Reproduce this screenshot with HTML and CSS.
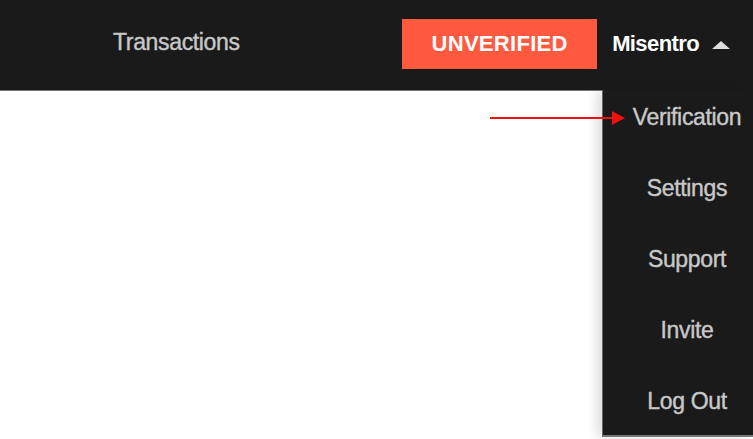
FILE: index.html
```html
<!DOCTYPE html>
<html>
<head>
<meta charset="utf-8">
<link rel="stylesheet" href="styles.css">
</head>
<body>
<header class="topbar">
  <nav class="nav">
    <a class="nav-link">Transactions</a>
  </nav>
  <div class="right">
    <span class="badge">UNVERIFIED</span>
    <button class="user">Misentro <span class="caret"></span></button>
  </div>
</header>
<main class="content">
  <ul class="menu">
    <li class="item">Verification</li>
    <li class="item">Settings</li>
    <li class="item">Support</li>
    <li class="item">Invite</li>
    <li class="item">Log Out</li>
  </ul>
  <div class="pointer"><span class="line"></span><span class="head"></span></div>
</main>
</body>
</html>
```
FILE: styles.css
```css
* { box-sizing: border-box; }
html, body { margin: 0; padding: 0; width: 753px; height: 439px; overflow: hidden; background: #fff; }
body { font-family: "Liberation Sans", Arial, sans-serif; }
.topbar {
  height: 91px;
  background: #1a1a1a;
  border-bottom: 1px solid #777;
  display: flex;
  align-items: center;
  justify-content: space-between;
}
.nav { padding-left: 113px; padding-bottom: 6px; }
.nav-link { color: #c8c8c8; font-size: 23px; letter-spacing: -0.35px; -webkit-text-stroke: 0.4px #c8c8c8; }
.right { display: flex; align-items: center; padding-bottom: 2px; }
.badge {
  width: 195px; height: 50px; background: #ff5a40; color: #fff;
  font-weight: bold; font-size: 22px; letter-spacing: 0.3px;
  display: flex; align-items: center; justify-content: center;
}
.user {
  background: none; border: 0; padding: 0 23px 0 15px; margin: 0;
  color: #fff; font-family: inherit; font-weight: bold; font-size: 22px; letter-spacing: -0.6px;
  display: flex; align-items: center; gap: 13px;
}
.caret { width: 0; height: 0; border-left: 9px solid transparent; border-right: 9px solid transparent; border-bottom: 8px solid #ddd; margin-top: 2px; }
.content { position: relative; height: 348px; }
.menu {
  position: absolute; right: 0; top: -1px; width: 151px; height: 347px;
  margin: 0; padding: 0 0 0 18px; list-style: none; overflow: hidden;
  background: #1a1a1a; border-left: 1px solid #666; border-bottom: 2px solid #777;
  box-shadow: -6px 0 10px rgba(0,0,0,0.12);
  display: flex; flex-direction: column; align-items: center;
}
.item { flex: none; height: 71px; display: flex; align-items: center; color: #c8c8c8; font-size: 23px; letter-spacing: -0.35px; -webkit-text-stroke: 0.4px #c8c8c8; }
.item:first-child { margin-top: -8px; }
.pointer { position: absolute; left: 490px; top: 20px; display: flex; align-items: center; }
.line { width: 122px; height: 2px; background: #f01010; }
.head { width: 0; height: 0; border-top: 7px solid transparent; border-bottom: 7px solid transparent; border-left: 13px solid #f01010; }
```
